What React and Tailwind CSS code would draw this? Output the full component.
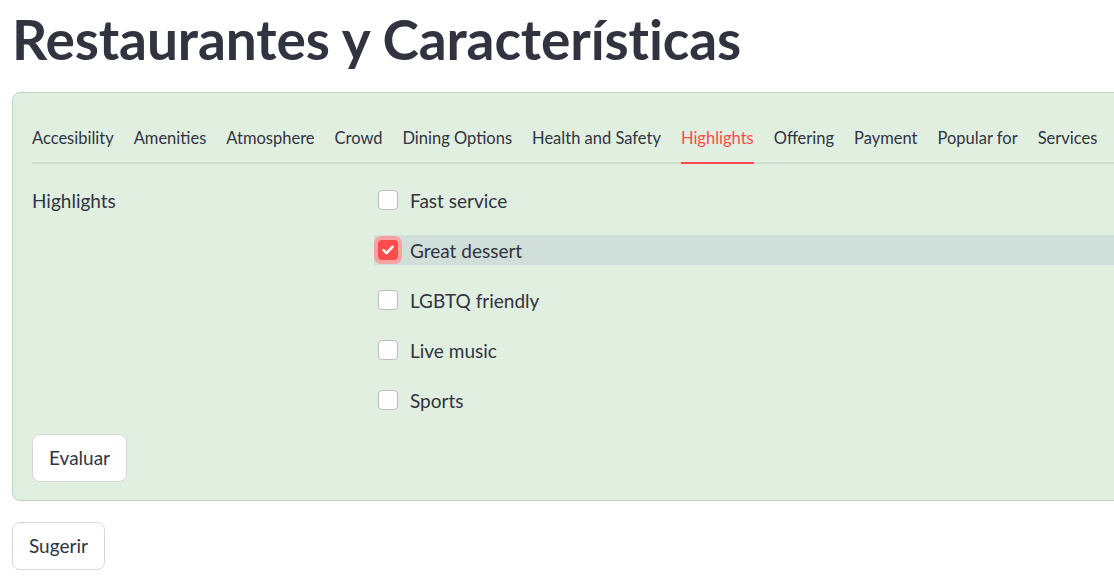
import React, { useState } from "react";

const TABS = [
  "Accesibility",
  "Amenities",
  "Atmosphere",
  "Crowd",
  "Dining Options",
  "Health and Safety",
  "Highlights",
  "Offering",
  "Payment",
  "Popular for",
  "Services",
];

const OPTIONS = ["Fast service", "Great dessert", "LGBTQ friendly", "Live music", "Sports"];

const Checkbox = ({ checked }) => (
  <span
    className={`flex items-center justify-center w-[28px] h-[28px] rounded-[7px] ${checked ? "bg-[#f7a3a3]" : ""}`}
  >
    {checked ? (
      <span className="flex items-center justify-center w-[20px] h-[20px] rounded-[4px] bg-[#ff4b4b]">
        <svg width="14" height="14" viewBox="0 0 14 14" fill="none">
          <path d="M2.5 7.2l3 3 6-6.4" stroke="white" strokeWidth="2.6" strokeLinecap="round" strokeLinejoin="round" />
        </svg>
      </span>
    ) : (
      <span className="w-[20px] h-[20px] rounded-[4px] bg-white border border-[#b9bcc4]" />
    )}
  </span>
);

const App = () => {
  const [active, setActive] = useState("Highlights");
  const [checked, setChecked] = useState({ "Great dessert": true });

  return (
    <div className="w-full h-[577px] overflow-hidden bg-white text-[#31333F] pl-[12px] pt-[7px] font-['Lato','Liberation_Sans',sans-serif]">
      <h1 className="text-[55px] font-bold leading-[64px] tracking-[-0.1px] whitespace-nowrap">
        Restaurantes y Características
      </h1>

      <div className="mt-[21px] w-[1140px] rounded-lg border border-[#c3d1c3] bg-[#e1efe1] pl-[19px] pt-[33px] pb-[18px]">
        {/* tabs */}
        <div className="flex gap-[20px] border-b-2 border-[#d0dccf] text-[16.5px]">
          {TABS.map((t) => (
            <button
              key={t}
              onClick={() => setActive(t)}
              className={`leading-[24px] pb-[12px] -mb-[2px] border-b-2 whitespace-nowrap ${
                active === t ? "border-[#ff4b4b] text-[#ff4b4b]" : "border-transparent"
              }`}
            >
              {t}
            </button>
          ))}
        </div>

        <div className="mt-[21px] grid grid-cols-[342px_1fr] text-[19px]">
          <div className="leading-[30px] pt-[1px]">Highlights</div>
          <div className="flex flex-col gap-[20px]">
            {OPTIONS.map((o) => (
              <label
                key={o}
                onClick={() => setChecked({ ...checked, [o]: !checked[o] })}
                className={`flex items-center h-[30px] gap-[8px] cursor-pointer ${
                  checked[o] ? "bg-[#d0dfda]" : ""
                }`}
              >
                <Checkbox checked={!!checked[o]} />
                <span className="leading-[30px] pt-[2px]">{o}</span>
              </label>
            ))}
          </div>
        </div>

        <button className="mt-[19px] h-[48px] px-[16px] rounded-lg bg-white border border-[#d5d9d5] text-[19px]">
          Evaluar
        </button>
      </div>

      <button className="mt-[21px] h-[48px] px-[16px] rounded-lg bg-white border border-[#d5d9d5] text-[19px]">
        Sugerir
      </button>
    </div>
  );
};

export default App;
